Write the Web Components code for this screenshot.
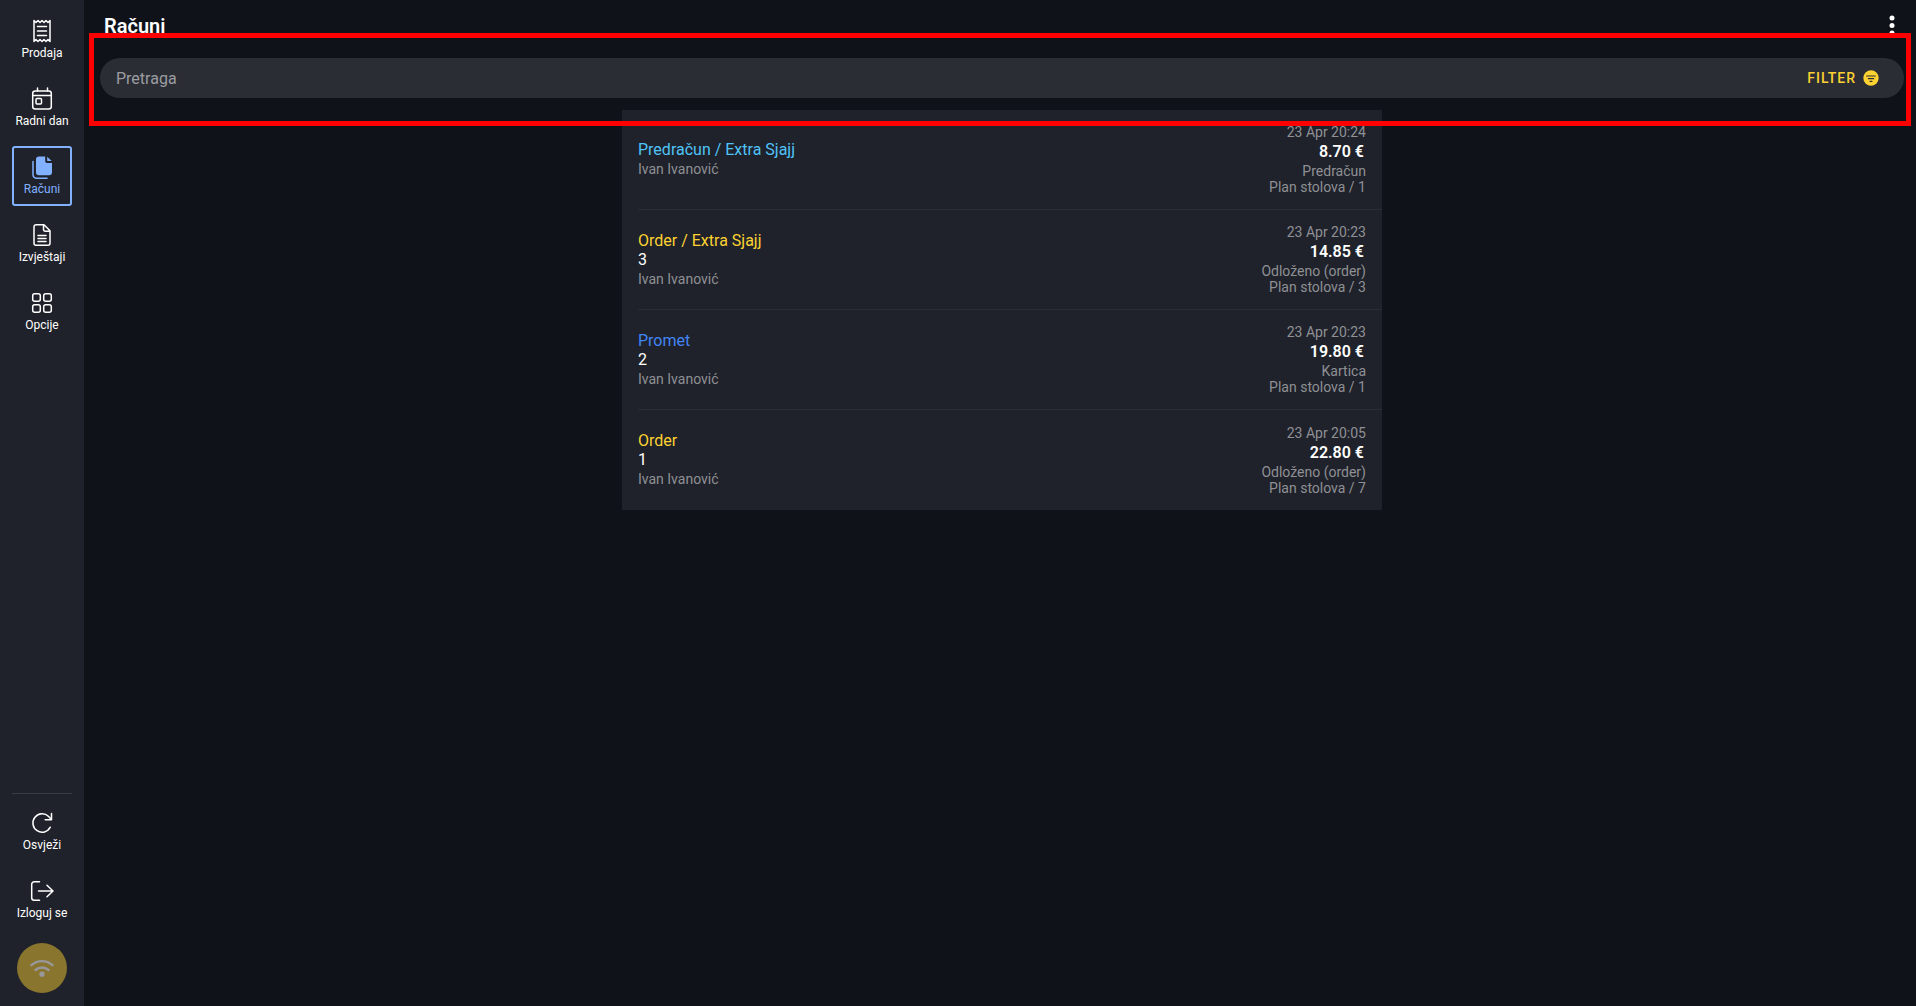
<!DOCTYPE html>
<html lang="hr">
<head>
<meta charset="utf-8">
<meta name="viewport" content="width=device-width, initial-scale=1">
<title>Računi</title>
<style>
  html, body {
    margin: 0;
    height: 100%;
  }
  body {
    font-family: Roboto, "Liberation Sans", sans-serif;
    color: #fff;
    background: #0f1219;
    --panel: #1f222a;
    --field: #2b2d35;
    --line: #2b2d35;
    --divider: #383b47;
    --muted: #8f9095;
    --accent: #82b1ff;
    --yellow: #fdd231;
    --cyan: #4fc3f7;
    --blue: #4285f4;
  }
</style>
</head>
<body>
<pos-app></pos-app>

<script>
const icons = {
  receipt: `<path d="M4 1.500v21M20 1.500v21M4 1.500l2 2 2-2 2 2 2-2 2 2 2-2 2 2 2-2M4 22.500l2-2 2 2 2-2 2 2 2-2 2 2 2-2 2 2M7.500 7.500h9M7.500 12h9M7.500 16.500h9"/>`,
  calendar: `<rect x="2.7" y="4" width="18.6" height="18" rx="2.5"/><path d="M2.7 8.500h18.6M7.500 1v3M17.500 1v3"/><rect x="6" y="11.5" width="5.5" height="5.5" rx="1"/>`,
  copies: `<path d="M9 1.500h6.200v4.700a1.800 1.800 0 0 0 1.800 1.800h5v9.200a3 3 0 0 1-3 3H9a3 3 0 0 1-3-3V4.500a3 3 0 0 1 3-3z" fill="currentColor" stroke="none"/><path d="M17.200 1.800V6h4.500z" fill="currentColor" stroke="none"/><path d="M3 6.500v13.300a3.500 3.500 0 0 0 3.500 3.500h10.500"/>`,
  report: `<path d="M14 1.700l6 6v12.600a2 2 0 0 1-2 2H6a2 2 0 0 1-2-2V3.700a2 2 0 0 1 2-2zM13.500 1.700v4.500a2 2 0 0 0 2 2H20M8 12.500h8M8 15.500h8M8 18.500h8"/>`,
  grid: `<rect x="2.7" y="2.7" width="7.6" height="7.6" rx="2"/><rect x="13.7" y="2.7" width="7.6" height="7.6" rx="2"/><rect x="2.7" y="13.7" width="7.6" height="7.6" rx="2"/><rect x="13.7" y="13.7" width="7.6" height="7.6" rx="2"/>`,
  refresh: `<path d="M20.300 16.200A9.200 9.200 0 1 1 18.600 5.500L21 8"/><path d="M21.500 2.500v6.300h-6.300"/>`,
  logout: `<path d="M9.500 2.800H4.200a2.500 2.500 0 0 0-2.500 2.500v13.400a2.500 2.500 0 0 0 2.500 2.500h5.300M8.500 12h14M17 6.200l6 5.800-6 5.800"/>`,
  wifi: `<path d="M1.500 9.200a15.500 15.500 0 0 1 21 0M5.500 14a9.500 9.500 0 0 1 13 0" stroke-width="2.4"/><circle cx="12" cy="18.200" r="2.600" fill="currentColor" stroke="none"/>`,
  filter: `<circle cx="12" cy="12" r="11.5" fill="currentColor" stroke="none"/><path d="M5.500 9h13M8 13h8M10.500 17h3" stroke="#2b2d35" stroke-width="1.800"/>`,
  dots: `<g fill="currentColor" stroke="none"><circle cx="12" cy="4" r="2.5"/><circle cx="12" cy="11.500" r="2.5"/><circle cx="12" cy="19" r="2.5"/></g>`
};

class PosIcon extends HTMLElement {

  constructor() {
    super();
    this.attachShadow({ mode: 'open' });
  }

  connectedCallback() {
    this.shadowRoot.innerHTML = `
      <style>
        :host { display: block; width: 24px; height: 24px; }
        svg { display: block; width: 100%; height: 100%; }
      </style>
      <svg viewBox="0 0 24 24" fill="none" stroke="currentColor" stroke-width="1.5" stroke-linecap="round" stroke-linejoin="round" aria-hidden="true">${icons[this.getAttribute('name')]}</svg>`;
  }
}

class PosNavItem extends HTMLElement {

  constructor() {
    super();
    this.attachShadow({ mode: 'open' });
  }

  connectedCallback() {
    this.shadowRoot.innerHTML = `
      <style>
        :host { display: block; }
        a {
          display: flex;
          flex-direction: column;
          align-items: center;
          gap: 2px;
          box-sizing: border-box;
          height: 60px;
          padding-top: 7px;
          border: 2px solid transparent;
          border-radius: 3px;
          color: #fff;
          font-size: 12px;
          line-height: 16px;
          white-space: nowrap;
          text-decoration: none;
        }
        :host([active]) a {
          color: var(--accent);
          border-color: var(--accent);
        }
      </style>
      <a href="#"><pos-icon name="${this.getAttribute('icon')}"></pos-icon><slot></slot></a>`;
  }
}

class PosSidebar extends HTMLElement {

  constructor() {
    super();
    this.attachShadow({ mode: 'open' });
  }

  connectedCallback() {
    this.shadowRoot.innerHTML = `
      <style>
        :host {
          display: flex;
          flex-direction: column;
          justify-content: space-between;
          box-sizing: border-box;
          width: 84px;
          padding: 10px 12px 13px;
          background: var(--panel);
        }
        nav, .bottom {
          display: flex;
          flex-direction: column;
          gap: 8px;
        }
        .bottom {
          padding-top: 8px;
          border-top: 1px solid var(--divider);
        }
        button {
          display: grid;
          place-items: center;
          align-self: center;
          width: 50px;
          height: 50px;
          margin-top: 5px;
          padding: 0;
          border: 0;
          border-radius: 50%;
          color: #98989c;
          background: #89752e;
        }
      </style>
      <nav>
        <pos-nav-item icon="receipt">Prodaja</pos-nav-item>
        <pos-nav-item icon="calendar">Radni dan</pos-nav-item>
        <pos-nav-item icon="copies" active>Računi</pos-nav-item>
        <pos-nav-item icon="report">Izvještaji</pos-nav-item>
        <pos-nav-item icon="grid">Opcije</pos-nav-item>
      </nav>
      <div class="bottom">
        <pos-nav-item icon="refresh">Osvježi</pos-nav-item>
        <pos-nav-item icon="logout">Izloguj se</pos-nav-item>
        <button type="button"><pos-icon name="wifi"></pos-icon></button>
      </div>`;
  }
}

class PosSearch extends HTMLElement {

  constructor() {
    super();
    this.attachShadow({ mode: 'open' });
  }

  connectedCallback() {
    this.shadowRoot.innerHTML = `
      <style>
        :host {
          display: flex;
          align-items: center;
          height: 40px;
          padding: 0 25px 0 16px;
          border-radius: 20px;
          background: var(--field);
        }
        label { flex: 1; display: flex; }
        input {
          flex: 1;
          height: 22px;
          padding: 1px 0 0;
          box-sizing: border-box;
          border: 0;
          outline: 0;
          color: #fff;
          background: none;
          font: 16px/21px Roboto, "Liberation Sans", sans-serif;
        }
        input::placeholder { color: #9c9da1; opacity: 1; }
        button {
          display: flex;
          align-items: center;
          gap: 7px;
          padding: 0;
          border: 0;
          color: var(--yellow);
          background: none;
          font: 500 14px/20px Roboto, "Liberation Sans", sans-serif;
          letter-spacing: 1px;
        }
        pos-icon { width: 16px; height: 16px; }
      </style>
      <label><input type="text" placeholder="Pretraga"></label>
      <button type="button">FILTER<pos-icon name="filter"></pos-icon></button>`;
  }
}

class PosBill extends HTMLElement {

  constructor() {
    super();
    this.attachShadow({ mode: 'open' });
  }

  connectedCallback() {
    this.shadowRoot.innerHTML = `
      <style>
        :host { display: block; padding-left: 16px; }
        .row {
          display: flex;
          justify-content: space-between;
          align-items: center;
          box-sizing: border-box;
          height: 100px;
          padding-right: 16px;
          border-bottom: 1px solid var(--line);
          color: var(--muted);
          font-size: 14px;
          line-height: 16px;
        }
        :host(:last-of-type) .row { border-bottom: 0; }
        .right { text-align: right; }
        .left { line-height: 20px; }
        ::slotted([slot=title]), ::slotted([slot=number]) {
          display: block;
          font-size: 16px;
          line-height: 19px;
        }
        ::slotted([slot=title]) { color: var(--yellow); }
        :host([kind=quote]) ::slotted([slot=title]) { color: var(--cyan); }
        :host([kind=sale]) ::slotted([slot=title]) { color: var(--blue); }
        ::slotted([slot=number]) { color: #fff; }
        ::slotted([slot=amount]) {
          display: block;
          padding-right: 2px;
          color: #fff;
          font-size: 16px;
          font-weight: 600;
          line-height: 23px;
        }
        ::slotted([slot=user]), ::slotted([slot=time]), ::slotted([slot=type]), ::slotted([slot=place]) {
          display: block;
        }
      </style>
      <div class="row">
        <div class="left">
          <slot name="title"></slot>
          <slot name="number"></slot>
          <slot name="user"></slot>
        </div>
        <div class="right">
          <slot name="time"></slot>
          <slot name="amount"></slot>
          <slot name="type"></slot>
          <slot name="place"></slot>
        </div>
      </div>`;
  }
}

class PosBillList extends HTMLElement {

  static get bills() {
    return [
      { kind: 'quote', title: 'Predračun / Extra Sjajj', number: '', time: '23 Apr 20:24', amount: '8.70 €', type: 'Predračun', place: 'Plan stolova / 1' },
      { kind: 'order', title: 'Order / Extra Sjajj', number: '3', time: '23 Apr 20:23', amount: '14.85 €', type: 'Odloženo (order)', place: 'Plan stolova / 3' },
      { kind: 'sale', title: 'Promet', number: '2', time: '23 Apr 20:23', amount: '19.80 €', type: 'Kartica', place: 'Plan stolova / 1' },
      { kind: 'order', title: 'Order', number: '1', time: '23 Apr 20:05', amount: '22.80 €', type: 'Odloženo (order)', place: 'Plan stolova / 7' }
    ];
  }

  constructor() {
    super();
    this.attachShadow({ mode: 'open' });
  }

  connectedCallback() {
    this.shadowRoot.innerHTML = `
      <style>
        :host {
          display: block;
          width: 100%;
          max-width: 760px;
          margin: 0 auto;
          background: var(--panel);
        }
      </style>
      ${PosBillList.bills.map( it => `
        <pos-bill kind="${it.kind}">
          <span slot="title">${it.title}</span>
          ${it.number ? `<span slot="number">${it.number}</span>` : ''}
          <span slot="user">Ivan Ivanović</span>
          <span slot="time">${it.time}</span>
          <span slot="amount">${it.amount}</span>
          <span slot="type">${it.type}</span>
          <span slot="place">${it.place}</span>
        </pos-bill>`).join('')}`;
  }
}

class PosApp extends HTMLElement {

  constructor() {
    super();
    this.attachShadow({ mode: 'open' });
  }

  connectedCallback() {
    this.shadowRoot.innerHTML = `
      <style>
        :host { display: flex; min-height: 100vh; }
        main {
          position: relative;
          flex: 1;
          padding: 0 12px 0 16px;
        }
        header {
          display: flex;
          justify-content: space-between;
          align-items: center;
          height: 52px;
          padding-left: 4px;
          margin-bottom: 6px;
        }
        h1 {
          margin: 0;
          font-size: 20px;
          font-weight: 600;
          line-height: 24px;
        }
        header button {
          padding: 0;
          border: 0;
          color: #fff;
          background: none;
        }
        pos-search { margin-bottom: 12px; }
        /* highlight frame drawn over the search bar */
        .frame {
          position: absolute;
          top: 33px;
          left: 5px;
          right: 5px;
          height: 83px;
          border: 5px solid #f00;
          pointer-events: none;
        }
      </style>
      <pos-sidebar></pos-sidebar>
      <main>
        <header>
          <h1>Računi</h1>
          <button type="button" aria-label="Izbornik"><pos-icon name="dots"></pos-icon></button>
        </header>
        <pos-search></pos-search>
        <pos-bill-list></pos-bill-list>
        <div class="frame"></div>
      </main>`;
  }
}

customElements.define('pos-icon', PosIcon);
customElements.define('pos-nav-item', PosNavItem);
customElements.define('pos-sidebar', PosSidebar);
customElements.define('pos-search', PosSearch);
customElements.define('pos-bill', PosBill);
customElements.define('pos-bill-list', PosBillList);
customElements.define('pos-app', PosApp);
</script>
</body>
</html>
